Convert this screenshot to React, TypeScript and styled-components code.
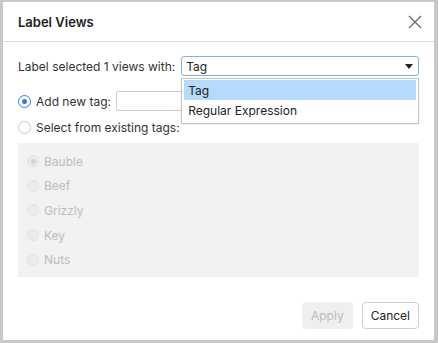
import styled, { createGlobalStyle } from "styled-components";

const GlobalStyle = createGlobalStyle`
  html, body {
    margin: 0;
    padding: 0;
    background: #c8c8c8;
    font-family: Inter, "Noto Sans", sans-serif;
    color: #333;
  }
`;

const Dialog = styled.div`
  margin: 2px 4px 3px 3px;
  height: 338px;
  background: white;
  display: flex;
  flex-direction: column;
  box-sizing: border-box;
`;

const Header = styled.div`
  height: 39px;
  display: flex;
  align-items: center;
  justify-content: space-between;
  padding: 0 11px 0 15px;
  border-bottom: 1px solid #dcdcdc;
  flex-shrink: 0;
`;

const Title = styled.h1`
  margin: 0;
  font-size: 13px;
  font-weight: 600;
  color: #222;
`;

const CloseButton = styled.button`
  border: none;
  background: none;
  padding: 0;
  width: 16px;
  height: 16px;
  display: flex;
  align-items: center;
  justify-content: center;
  cursor: pointer;
`;

const Body = styled.div`
  padding: 14px 15px 0 15px;
  display: flex;
  flex-direction: column;
`;

const Row = styled.div<{ $top?: number }>`
  display: flex;
  align-items: center;
  gap: 5px;
  font-size: 12px;
  margin-top: ${(p) => p.$top ?? 0}px;
`;

const SelectWrap = styled.div`
  position: relative;
  flex: 1;
  margin-left: 1px;
`;

const SelectBox = styled.div`
  height: 20px;
  box-sizing: border-box;
  border: 1px solid #7fb3e6;
  border-radius: 3px;
  display: flex;
  align-items: center;
  justify-content: space-between;
  padding: 0 5px 0 4px;
  font-size: 12px;
  color: #222;
`;

const Arrow = styled.span`
  width: 0;
  height: 0;
  border-left: 4px solid transparent;
  border-right: 4px solid transparent;
  border-top: 5px solid #222;
`;

const Menu = styled.ul`
  position: absolute;
  top: 22px;
  left: 0;
  right: 0;
  margin: 0;
  padding: 1px 2px 3px;
  list-style: none;
  background: white;
  border: 1px solid #c4c4c4;
  box-shadow: 0 1px 2px rgba(0, 0, 0, 0.08);
  z-index: 2;
`;

const MenuItem = styled.li<{ $active?: boolean }>`
  height: 20px;
  display: flex;
  align-items: center;
  padding: 0 4px;
  font-size: 12px;
  color: #222;
  background: ${(p) => (p.$active ? "#b5dafc" : "transparent")};
`;

const Radio = styled.span<{ $checked?: boolean; $disabled?: boolean; $size?: number }>`
  width: ${(p) => p.$size ?? 13}px;
  height: ${(p) => p.$size ?? 13}px;
  box-sizing: border-box;
  border-radius: 50%;
  flex-shrink: 0;
  border: 1px solid
    ${(p) => (p.$disabled ? "#e2e2e2" : p.$checked ? "#2d7fd6" : "#c9c9c9")};
  background: ${(p) => (p.$disabled ? "#ebebeb" : "white")};
  display: flex;
  align-items: center;
  justify-content: center;
  &::after {
    content: "";
    width: 5px;
    height: 5px;
    border-radius: 50%;
    display: ${(p) => (p.$checked ? "block" : "none")};
    background: ${(p) => (p.$disabled ? "#d4d4d4" : "#2d7fd6")};
  }
`;

const TextInput = styled.div`
  width: 150px;
  height: 20px;
  box-sizing: border-box;
  border: 1px solid #ccc;
  border-radius: 2px;
`;

const TagBox = styled.div`
  margin-top: 8px;
  height: 134px;
  box-sizing: border-box;
  background: #f2f2f2;
  padding: 6px 9px;
  display: flex;
  flex-direction: column;
`;

const TagItem = styled.div`
  height: 24.6px;
  flex-shrink: 0;
  display: flex;
  align-items: center;
  gap: 5px;
  font-size: 12px;
  color: #bdbdbd;
`;

const Footer = styled.div`
  margin-top: auto;
  display: flex;
  justify-content: flex-end;
  gap: 9px;
  padding: 0 15px 11px;
`;

const Button = styled.button<{ $disabled?: boolean }>`
  height: 27px;
  padding: 0 8px;
  border-radius: 4px;
  font-family: inherit;
  font-size: 12px;
  border: 1px solid ${(p) => (p.$disabled ? "#efefef" : "#cfcfcf")};
  background: ${(p) => (p.$disabled ? "#efefef" : "white")};
  color: ${(p) => (p.$disabled ? "#bcbcbc" : "#222")};
`;

const tags = ["Bauble", "Beef", "Grizzly", "Key", "Nuts"];

export default function App() {
  return (
    <>
      <GlobalStyle />
      <Dialog>
        <Header>
          <Title>Label Views</Title>
          <CloseButton aria-label="close">
            <svg width="14" height="14" viewBox="0 0 14 14">
              <path d="M1 1L13 13M13 1L1 13" stroke="#666" strokeWidth="1.3" />
            </svg>
          </CloseButton>
        </Header>
        <Body>
          <Row>
            <span>Label selected 1 views with:</span>
            <SelectWrap>
              <SelectBox>
                <span>Tag</span>
                <Arrow />
              </SelectBox>
              <Menu>
                <MenuItem $active>Tag</MenuItem>
                <MenuItem>Regular Expression</MenuItem>
              </Menu>
            </SelectWrap>
          </Row>
          <Row $top={15}>
            <Radio $checked />
            <span>Add new tag:</span>
            <TextInput />
          </Row>
          <Row $top={9}>
            <Radio />
            <span>Select from existing tags:</span>
          </Row>
          <TagBox>
            {tags.map((t, i) => (
              <TagItem key={t}>
                <Radio $disabled $checked={i === 0} $size={12} />
                <span>{t}</span>
              </TagItem>
            ))}
          </TagBox>
        </Body>
        <Footer>
          <Button $disabled>Apply</Button>
          <Button>Cancel</Button>
        </Footer>
      </Dialog>
    </>
  );
}
